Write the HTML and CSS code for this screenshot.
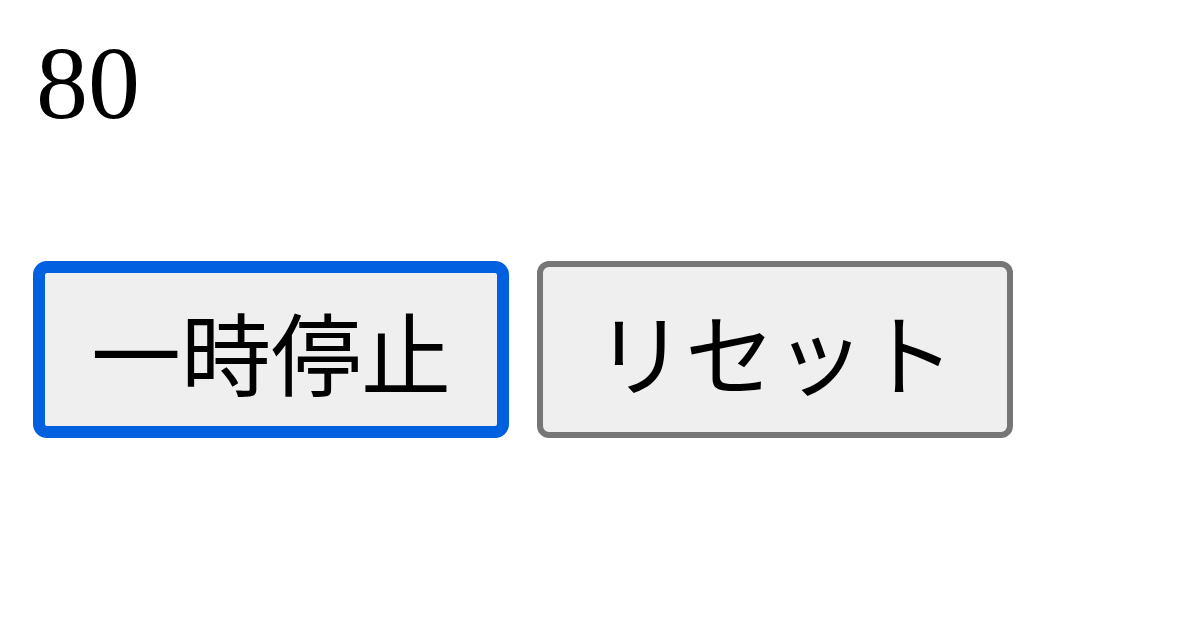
FILE: index.html
```html
<!DOCTYPE html>
<html lang="ja">
<head>
  <meta charset="UTF-8">
  <meta name="viewport" content="width=device-width, initial-scale=1.0">
  <title>タイマー</title>
  <link rel="stylesheet" href="styles.css">
</head>
<body>
  <div class="timer">
    <div class="count">80</div>
    <div class="controls">
      <button class="btn btn-focus" type="button">一時停止</button>
      <button class="btn" type="button">リセット</button>
    </div>
  </div>
</body>
</html>
```

FILE: styles.css
```css
* {
  margin: 0;
  padding: 0;
  box-sizing: border-box;
}

body {
  background-color: #ffffff;
  font-family: "Liberation Serif", serif;
  color: #000000;
}

.timer {
  padding: 31px 0 0 33px;
}

.count {
  font-family: "Liberation Serif", serif;
  font-size: 104px;
  line-height: 1;
  height: 104px;
  padding-left: 3px;
}

.controls {
  display: flex;
  gap: 28px;
  margin-top: 126px;
}

.btn {
  width: 476px;
  height: 177px;
  display: flex;
  align-items: center;
  justify-content: center;
  background-color: #efefef;
  border: 6px solid #767676;
  border-radius: 12px;
  font-family: "Noto Sans CJK JP", "Noto Sans", sans-serif;
  font-size: 90px;
  color: #000000;
  cursor: pointer;
}

.btn-focus {
  border: 12px solid #0060df;
  border-radius: 14px;
}
```
